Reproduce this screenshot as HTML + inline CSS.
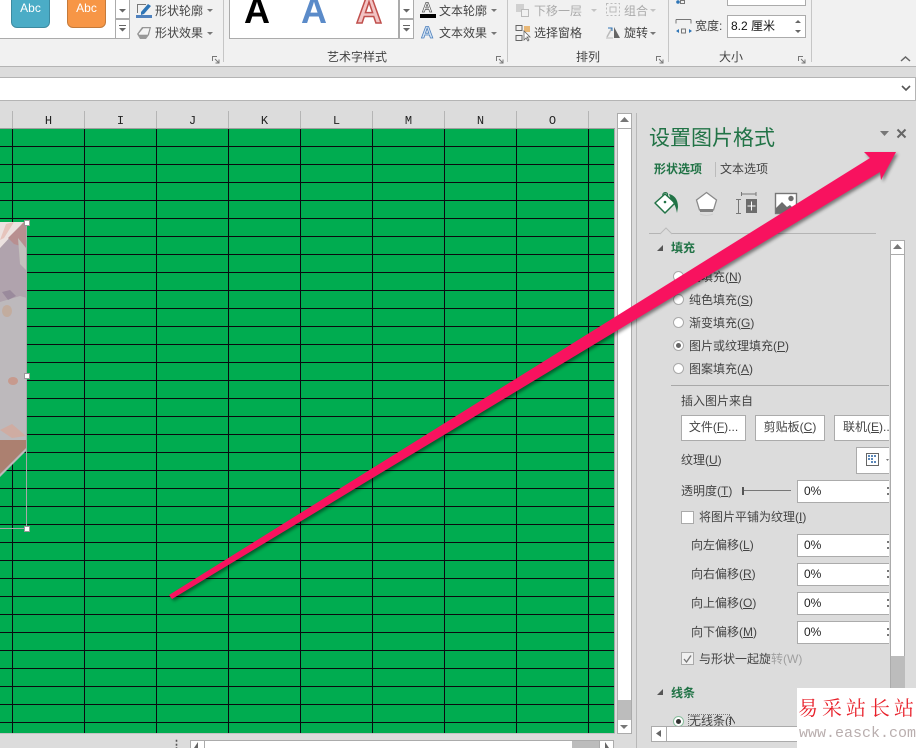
<!DOCTYPE html>
<html lang="zh"><head><meta charset="utf-8">
<style>
html,body{margin:0;padding:0;width:916px;height:748px;overflow:hidden;background:#dcdcdc}
body{position:relative;font-family:"Liberation Sans","Noto Sans CJK SC",sans-serif;font-size:12px;color:#444}
.a{position:absolute}
.t{position:absolute;white-space:nowrap;line-height:16px;font-size:12px}
.g{color:#217346}
.box{position:absolute;background:#fff;border:1px solid #ababab;box-sizing:border-box}
.inp{position:absolute;left:797px;width:92px;height:23px;background:#fff;border:1px solid #ababab;border-right:0;box-sizing:border-box;font-size:12px;color:#222;line-height:21px;padding-left:6px}
.inp::after{content:"";position:absolute;right:0;top:6px;width:2px;height:2px;background:#777;box-shadow:0 6px 0 #777}
.r{position:absolute;left:673px;width:9px;height:9px;border:1px solid #aaa;border-radius:50%;background:#fff}
.c{position:absolute;top:113px;font:12px "Liberation Mono",monospace;color:#222;width:73px;text-align:center;line-height:16px}
.s{position:absolute;top:111px;width:1px;height:17px;background:#b5b5b5}
.w{position:absolute;top:-7px;font:bold 36px/36px "Liberation Sans",sans-serif}
u{text-decoration:underline}
</style></head><body>
<!-- ribbon -->
<div class="a" style="left:0;top:0;width:916px;height:66px;background:#f1f1f1"></div>
<div class="a" style="left:0;top:66px;width:916px;height:1px;background:#b4b4b4"></div>
<div class="a" style="left:0;top:77px;width:916px;height:1px;background:#b4b4b4"></div>
<div class="a" style="left:0;top:78px;width:915px;height:22px;background:#fff"></div>
<div class="a" style="left:915px;top:78px;width:1px;height:22px;background:#b4b4b4"></div>
<div class="a" style="left:0;top:100px;width:916px;height:1px;background:#b4b4b4"></div>
<svg class="a" style="left:901px;top:84px" width="12" height="10"><path d="M1 2l4 4 4-4" fill="none" stroke="#555" stroke-width="1.600"/></svg>
<!-- shape gallery -->
<div class="a" style="left:0;top:0;width:130px;height:39px;background:#fff;border-bottom:1px solid #ababab;box-sizing:border-box"></div>
<div class="a" style="left:11px;top:-11px;width:39px;height:39px;background:#4bacc6;border:1px solid #3d8aa0;border-radius:6px;color:#fff;text-align:center;font-size:12px;line-height:26px;padding-top:5px;box-sizing:border-box">Abc</div>
<div class="a" style="left:67px;top:-11px;width:39px;height:39px;background:#f79646;border:1px solid #c47a3a;border-radius:6px;color:#fff;text-align:center;font-size:12px;line-height:26px;padding-top:5px;box-sizing:border-box">Abc</div>
<div class="box" style="left:115px;top:-2px;width:15px;height:21px"></div>
<div class="box" style="left:115px;top:19px;width:15px;height:20px"></div>
<svg class="a" style="left:118px;top:6px" width="9" height="28"><path d="M1 3h7l-3.500 3.500zM1 22h7l-3.500 3.500z" fill="#666"/><path d="M1 19.500h7" stroke="#666"/></svg>
<svg class="a" style="left:135px;top:1px" width="18" height="18"><path d="M2 3h9v1H3v8H2z" fill="#777"/><path d="M6 11l7-8 3 2-7 8-3 1z" fill="#2e75b6"/><rect x="1" y="14" width="16" height="3" fill="#4f81bd"/></svg>
<svg class="a" style="left:135px;top:25px" width="18" height="16"><path d="M2 9l5-7h9l-2 8-3 4H5z" fill="#9a9a9a"/><path d="M3 9l5-6h7l-2 7H4z" fill="#f4f4f4" stroke="#888" stroke-width=".6"/></svg>
<div class="t" style="left:155px;top:3px">形状轮廓</div>
<svg class="a" style="left:207px;top:8px" width="7" height="5"><path d="M0 1h6l-3 3z" fill="#777"/></svg>
<div class="t" style="left:155px;top:25px">形状效果</div>
<svg class="a" style="left:207px;top:31px" width="7" height="5"><path d="M0 1h6l-3 3z" fill="#777"/></svg>
<div class="a" style="left:223px;top:0;width:1px;height:62px;background:#c6c6c6"></div>
<svg class="a" style="left:212px;top:56px" width="9" height="8"><path d="M.5 5V.5H5M3 3l4 4M7 3.500V7H3.500" fill="none" stroke="#777"/></svg>
<!-- wordart -->
<div class="a" style="left:229px;top:0;width:170px;height:39px;background:#fff;border:1px solid #ababab;border-top:0;box-sizing:border-box"></div>
<div class="w" style="left:244px;color:#000">A</div>
<div class="w" style="left:301px;color:#5b8bc9">A</div>
<div class="w" style="left:356px;color:#f2c4c4;-webkit-text-stroke:1.500px #c0504d">A</div>
<div class="box" style="left:399px;top:-2px;width:15px;height:21px"></div>
<div class="box" style="left:399px;top:19px;width:15px;height:20px"></div>
<svg class="a" style="left:402px;top:6px" width="9" height="28"><path d="M1 3h7l-3.500 3.500zM1 22h7l-3.500 3.500z" fill="#666"/><path d="M1 19.500h7" stroke="#666"/></svg>
<div class="a" style="left:422px;top:0;font:bold 14px/15px 'Liberation Sans',sans-serif;color:#fff;-webkit-text-stroke:.7px #555">A</div>
<div class="a" style="left:420px;top:14px;width:16px;height:4px;background:#000"></div>
<div class="a" style="left:421px;top:24px;font:bold 17px/17px 'Liberation Sans',sans-serif;color:#d4e4f4;-webkit-text-stroke:.8px #4f81bd">A</div>
<div class="t" style="left:439px;top:3px">文本轮廓</div>
<svg class="a" style="left:491px;top:8px" width="7" height="5"><path d="M0 1h6l-3 3z" fill="#777"/></svg>
<div class="t" style="left:439px;top:25px">文本效果</div>
<svg class="a" style="left:491px;top:31px" width="7" height="5"><path d="M0 1h6l-3 3z" fill="#777"/></svg>
<div class="t" style="left:327px;top:49px">艺术字样式</div>
<svg class="a" style="left:496px;top:56px" width="9" height="8"><path d="M.5 5V.5H5M3 3l4 4M7 3.500V7H3.500" fill="none" stroke="#777"/></svg>
<div class="a" style="left:507px;top:0;width:1px;height:62px;background:#c6c6c6"></div>
<!-- arrange -->
<svg class="a" style="left:515px;top:2px" width="16" height="16"><rect x="1" y="2" width="8" height="8" fill="#d0d0d0"/><rect x="6.500" y="7.500" width="7" height="7" fill="#f1f1f1" stroke="#bbb"/></svg>
<div class="t" style="left:534px;top:3px;color:#aaa">下移一层</div>
<svg class="a" style="left:591px;top:8px" width="7" height="5"><path d="M0 1h6l-3 3z" fill="#c4c4c4"/></svg>
<svg class="a" style="left:605px;top:2px" width="16" height="15"><rect x="1.500" y="1.500" width="13" height="12" fill="none" stroke="#bbb" stroke-dasharray="2 2"/><rect x="5" y="5" width="6" height="5" fill="none" stroke="#bbb"/></svg>
<div class="t" style="left:624px;top:3px;color:#aaa">组合</div>
<svg class="a" style="left:650px;top:8px" width="7" height="5"><path d="M0 1h6l-3 3z" fill="#c4c4c4"/></svg>
<svg class="a" style="left:515px;top:24px" width="18" height="18"><rect x="1" y="1.500" width="6" height="5" fill="none" stroke="#666"/><rect x="1" y="11.500" width="6" height="5" fill="none" stroke="#666"/><rect x="9" y="2" width="6" height="6" fill="#e8b878"/><path d="M9 7v9l2-2 2 3 1-1-2-3h3z" fill="#fff" stroke="#666" stroke-width=".8"/></svg>
<div class="t" style="left:534px;top:25px">选择窗格</div>
<svg class="a" style="left:605px;top:25px" width="17" height="14"><path d="M2 12L7 3" stroke="#bbb" stroke-width="1.500"/><path d="M3 3h4v3" fill="none" stroke="#2e75b6"/><path d="M9 13V2l6 11z" fill="#666"/><path d="M1 13h7" stroke="#bbb"/></svg>
<div class="t" style="left:624px;top:25px">旋转</div>
<svg class="a" style="left:650px;top:31px" width="7" height="5"><path d="M0 1h6l-3 3z" fill="#777"/></svg>
<div class="t" style="left:576px;top:49px">排列</div>
<svg class="a" style="left:656px;top:56px" width="9" height="8"><path d="M.5 5V.5H5M3 3l4 4M7 3.500V7H3.500" fill="none" stroke="#777"/></svg>
<div class="a" style="left:668px;top:0;width:1px;height:62px;background:#c6c6c6"></div>
<!-- size -->
<div class="box" style="left:727px;top:-8px;width:79px;height:14px"></div>
<svg class="a" style="left:675px;top:0" width="18" height="6"><path d="M5.500.5h4v3h-4z" fill="none" stroke="#777"/><circle cx="3" cy="2" r="1.800" fill="#2e75b6"/></svg>
<svg class="a" style="left:675px;top:17px" width="18" height="18"><path d="M1 2.500h15M1 2.500v4M16 2.500v4" fill="none" stroke="#777"/><path d="M1 14l3-2v4zM17 14l-3-2v4z" fill="#2e75b6"/><rect x="6.500" y="12" width="4" height="4" fill="none" stroke="#777"/></svg>
<div class="t" style="left:695px;top:18px">宽度:</div>
<div class="box" style="left:727px;top:15px;width:79px;height:23px;padding-left:3px;line-height:21px;color:#111;font-size:12px">8.2 厘米</div>
<svg class="a" style="left:794px;top:19px" width="9" height="16"><path d="M1 4h6L4 1zM1 11h6l-3 3z" fill="#666"/></svg>
<div class="t" style="left:719px;top:49px">大小</div>
<svg class="a" style="left:798px;top:56px" width="9" height="8"><path d="M.5 5V.5H5M3 3l4 4M7 3.500V7H3.500" fill="none" stroke="#777"/></svg>
<div class="a" style="left:811px;top:0;width:1px;height:62px;background:#c6c6c6"></div>
<svg class="a" style="left:900px;top:55px" width="12" height="8"><path d="M1 6l4.500-4L10 6" fill="none" stroke="#666" stroke-width="1.500"/></svg>

<!-- col header -->
<div class="c" style="left:12px">H</div><div class="c" style="left:84px">I</div><div class="c" style="left:156px">J</div><div class="c" style="left:228px">K</div><div class="c" style="left:300px">L</div><div class="c" style="left:372px">M</div><div class="c" style="left:444px">N</div><div class="c" style="left:516px">O</div>
<div class="s" style="left:12px"></div><div class="s" style="left:84px"></div><div class="s" style="left:156px"></div><div class="s" style="left:228px"></div><div class="s" style="left:300px"></div><div class="s" style="left:372px"></div><div class="s" style="left:444px"></div><div class="s" style="left:516px"></div><div class="s" style="left:588px"></div>
<div class="a" style="left:0;top:128px;width:615px;height:1px;background:#a0a0a0"></div>
<!-- grid -->
<div class="a" style="left:0;top:129px;width:614px;height:604px;background-color:#00ac50;background-image:repeating-linear-gradient(to right,transparent 0 12px,#0a0a10 12px 13px,transparent 13px 72px),repeating-linear-gradient(to bottom,transparent 0 17px,#0a0a10 17px 18px)"></div>
<div class="a" style="left:614px;top:129px;width:1px;height:605px;background:#a8a8a8"></div>
<div class="a" style="left:0;top:733px;width:615px;height:1px;background:#c4c4c4"></div>
<!-- bottom scrollbar -->
<div class="a" style="left:171px;top:744px;font:bold 11px/3px 'Liberation Sans',sans-serif;color:#555">⋮</div>
<div class="box" style="left:190px;top:740px;width:424px;height:10px"></div>
<div class="a" style="left:204px;top:741px;width:1px;height:8px;background:#ababab"></div>
<div class="a" style="left:572px;top:741px;width:27px;height:8px;background:#bcbcbc"></div>
<div class="a" style="left:599px;top:741px;width:1px;height:8px;background:#ababab"></div>
<svg class="a" style="left:193px;top:742px" width="8" height="6"><path d="M5 0v6H1z" fill="#666"/></svg>
<svg class="a" style="left:603px;top:742px" width="8" height="6"><path d="M2 0v6h4z" fill="#666"/></svg>
<!-- vert scrollbar -->
<div class="box" style="left:617px;top:113px;width:15px;height:621px;background:#fff"></div>
<div class="a" style="left:618px;top:128px;width:13px;height:1px;background:#ababab"></div>
<svg class="a" style="left:620px;top:117px" width="9" height="6"><path d="M0 5h9L4.500 0z" fill="#777"/></svg>
<div class="a" style="left:618px;top:700px;width:13px;height:20px;background:#bcbcbc"></div>
<svg class="a" style="left:620px;top:724px" width="9" height="6"><path d="M0 1h8L4 5z" fill="#777"/></svg>
<!-- picture -->
<svg class="a" style="left:0;top:218px" width="32" height="316" viewBox="0 0 32 316">
<path d="M0 4H27V232L0 259z" fill="#bdb9bc"/>
<path d="M27 4V80L20 78 0 84V30L24 4z" fill="#b0a3ad"/>
<path d="M0 4H24L0 30z" fill="#ece2e0"/>
<path d="M6 6L14 4 4 20 0 22z" fill="#e6c4bc"/>
<path d="M24 4H27V30L14 26 8 20z" fill="#b88f90"/>
<path d="M18 20L26 30V52L20 46z" fill="#c4c0bd"/>
<path d="M2 74l8-2 6 6-8 4z" fill="#9a8a9c"/>
<ellipse cx="7" cy="93" rx="5" ry="6" fill="#c2ac9e"/>
<ellipse cx="13" cy="163" rx="5" ry="4" fill="#c79a8e"/>
<path d="M0 212l12-6 14 12-14 2z" fill="#cfaca2"/>
<path d="M0 222h26v8L8 248 0 256z" fill="#ac8070"/>
<path d="M26.500 4v306M0 310.500h26.500" stroke="#a8a8a8" fill="none"/>
<rect x="24.500" y="2.500" width="5" height="5" fill="#fff" stroke="#999"/><rect x="24.500" y="155.500" width="5" height="5" fill="#fff" stroke="#999"/><rect x="24.500" y="308.500" width="5" height="5" fill="#fff" stroke="#999"/>
</svg>
<!-- panel -->
<div class="a" style="left:636px;top:113px;width:1px;height:635px;background:#b8b8b8"></div>
<div class="t" style="left:649px;top:126px;font-size:21px;line-height:26px;color:#217346">设置图片格式</div>
<svg class="a" style="left:880px;top:131px" width="10" height="7"><path d="M0 0h9L4.500 5z" fill="#777"/></svg>
<svg class="a" style="left:896px;top:128px" width="12" height="12"><path d="M1.500 1.500l8 8M9.500 1.500l-8 8" stroke="#666" stroke-width="2"/></svg>
<div class="t" style="left:654px;top:161px;color:#217346;font-weight:bold">形状选项</div>
<div class="a" style="left:715px;top:162px;width:1px;height:15px;background:#bbb"></div>
<div class="t" style="left:720px;top:161px">文本选项</div>
<!-- icons drawn in page coordinates -->
<svg class="a" style="left:640px;top:180px" width="170" height="50" viewBox="640 180 170 50">
<path d="M665 198l-2-2a2.400 2.400 0 0 1 4.500-2v8" fill="none" stroke="#217346" stroke-width="1.200"/>
<path d="M665 194l10 9-10 10-10-10z" fill="#fff" stroke="#217346" stroke-width="1.500" stroke-linejoin="round"/>
<circle cx="665" cy="202" r="1.300" fill="#217346"/>
<path d="M669 194c5 1 9 5 9 13l-1 6c-1-5-2-9-6-13z" fill="#217346"/>
<path d="M706.500 192.500l10 7.500-3 10h-14l-3-10z" fill="#fff" stroke="#8a8a8a" stroke-width="1.300"/>
<rect x="700" y="209" width="13" height="3" fill="#808080"/>
<path d="M700 214q6.500 3 13 0" fill="none" stroke="#cfcfcf"/>
<path d="M741.500 192v4M756 192v4M741.500 194h14.500M736 199.500h5M736 213.500h5M738.500 199.500v14" fill="none" stroke="#777"/>
<rect x="746" y="199" width="11" height="14" fill="#6d6d6d"/>
<path d="M751.500 201.500v9M747.500 206h8" stroke="#fff"/>
<rect x="775.500" y="193.500" width="21" height="20" fill="#fff" stroke="#777" stroke-width="1.400"/>
<path d="M776 213v-5l6-6 5 5 3-2 6 6v2z" fill="#6d6d6d"/>
<circle cx="791" cy="198.500" r="2.700" fill="#6d6d6d"/>
</svg>
<div class="a" style="left:649px;top:233px;width:227px;height:1px;background:#b4b4b4"></div>
<svg class="a" style="left:660px;top:227px" width="14" height="8"><path d="M0 7l6-6 6 6" fill="#dcdcdc" stroke="#bbb"/></svg>
<svg class="a" style="left:657px;top:244px" width="8" height="8"><path d="M6 1v6H0z" fill="#555"/></svg>
<div class="t g" style="left:671px;top:240px;font-weight:bold">填充</div>
<div class="r" style="top:271px"></div><div class="t" style="left:689px;top:269px">无填充(<u>N</u>)</div>
<div class="r" style="top:294px"></div><div class="t" style="left:689px;top:292px">纯色填充(<u>S</u>)</div>
<div class="r" style="top:317px"></div><div class="t" style="left:689px;top:315px">渐变填充(<u>G</u>)</div>
<div class="r" style="top:340px"></div><div class="a" style="left:676px;top:343px;width:5px;height:5px;border-radius:50%;background:#666"></div><div class="t" style="left:689px;top:338px">图片或纹理填充(<u>P</u>)</div>
<div class="r" style="top:363px"></div><div class="t" style="left:689px;top:361px">图案填充(<u>A</u>)</div>
<div class="a" style="left:671px;top:385px;width:218px;height:1px;background:#a8a8a8"></div>
<div class="t" style="left:681px;top:393px">插入图片来自</div>
<div class="box" style="left:681px;top:415px;width:65px;height:26px;text-align:center;line-height:22px">文件(<u>F</u>)...</div>
<div class="box" style="left:755px;top:415px;width:70px;height:26px;text-align:center;line-height:22px">剪贴板(<u>C</u>)</div>
<div class="box" style="left:834px;top:415px;width:55px;height:26px;border-right:0;padding-left:8px;line-height:22px;overflow:hidden;white-space:nowrap">联机(<u>E</u>)...</div>
<div class="t" style="left:681px;top:452px">纹理(<u>U</u>)</div>
<div class="box" style="left:856px;top:447px;width:33px;height:27px;border-right:0"></div>
<svg class="a" style="left:866px;top:453px" width="23" height="14"><rect x=".5" y=".5" width="12" height="12" fill="#fff" stroke="#666"/><path d="M2 2h2v2H2zM5 2h2v2H5zM8 2h2v2H8zM2 5h2v2H2zM5 5h2v2H5zM8 8h2v2H8zM5 8h2v2H5z" fill="#5b87b8"/><path d="M20 6h3l-1.500 2z" fill="#777"/></svg>
<div class="t" style="left:681px;top:483px">透明度(<u>T</u>)</div>
<div class="a" style="left:742px;top:487px;width:2px;height:8px;background:#555"></div>
<div class="a" style="left:744px;top:490px;width:47px;height:1px;background:#777"></div>
<div class="inp" style="top:480px">0%</div>
<div class="a" style="left:681px;top:511px;width:11px;height:11px;border:1px solid #aaa;background:#fff"></div>
<div class="t" style="left:699px;top:509px">将图片平铺为纹理(<u>I</u>)</div>
<div class="t" style="left:691px;top:537px">向左偏移(<u>L</u>)</div><div class="inp" style="top:534px">0%</div>
<div class="t" style="left:691px;top:566px">向右偏移(<u>R</u>)</div><div class="inp" style="top:563px">0%</div>
<div class="t" style="left:691px;top:595px">向上偏移(<u>O</u>)</div><div class="inp" style="top:592px">0%</div>
<div class="t" style="left:691px;top:624px">向下偏移(<u>M</u>)</div><div class="inp" style="top:621px">0%</div>
<div class="a" style="left:681px;top:652px;width:11px;height:11px;border:1px solid #aaa;background:#f0f0f0"></div>
<svg class="a" style="left:683px;top:654px" width="10" height="10"><path d="M1 5l2.500 3L8 1.500" fill="none" stroke="#777" stroke-width="1.300"/></svg>
<div class="t" style="left:699px;top:651px;width:104px;overflow:hidden">与形状一起旋转(W)</div>
<div class="a" style="left:770px;top:650px;width:35px;height:16px;background:rgba(220,220,220,.6)"></div>
<svg class="a" style="left:657px;top:688px" width="8" height="8"><path d="M6 1v6H0z" fill="#555"/></svg>
<div class="t g" style="left:671px;top:685px;font-weight:bold">线条</div>
<div class="a" style="left:673px;top:716px;width:9px;height:9px;border:1px solid #8abf9e;border-radius:50%;background:#fff"></div>
<div class="a" style="left:676px;top:719px;width:5px;height:5px;border-radius:50%;background:#333"></div>
<div class="a" style="left:688px;top:714px;width:42px;height:14px;border:1px dotted #777;box-sizing:border-box"></div>
<div class="t" style="left:689px;top:713px;width:46px;overflow:hidden">无线条(N)</div>
<!-- panel scrollbars -->
<div class="box" style="left:890px;top:240px;width:15px;height:500px"></div>
<div class="a" style="left:891px;top:254px;width:13px;height:1px;background:#ababab"></div>
<svg class="a" style="left:893px;top:244px" width="9" height="6"><path d="M0 5h9L4.500 0z" fill="#777"/></svg>
<div class="a" style="left:891px;top:656px;width:14px;height:84px;background:#bcbcbc"></div>
<div class="box" style="left:651px;top:726px;width:254px;height:16px"></div>
<div class="a" style="left:666px;top:727px;width:1px;height:14px;background:#ababab"></div>
<svg class="a" style="left:655px;top:730px" width="8" height="8"><path d="M6 0v7L1 3.500z" fill="#666"/></svg>
<!-- arrow -->
<svg class="a" style="left:0;top:0;filter:drop-shadow(2px 2px 1.500px rgba(0,0,0,.45))" width="916" height="748"><path d="M169 595L870 158 864 152H896L881 180 880 172 172 599z" fill="#f8125f"/></svg>
<!-- watermark -->
<div class="a" style="left:797px;top:688px;width:119px;height:60px;background:#fff"></div>
<div class="a" style="left:798px;top:695px;font:20px/24px 'Noto Serif CJK SC',serif;color:#e8202a;white-space:nowrap;letter-spacing:4px">易采站长站</div>
<div class="a" style="left:799px;top:725px;font:15px/18px 'Liberation Mono',monospace;color:#b9aeae;white-space:nowrap">www.easck.com</div>
</body></html>
